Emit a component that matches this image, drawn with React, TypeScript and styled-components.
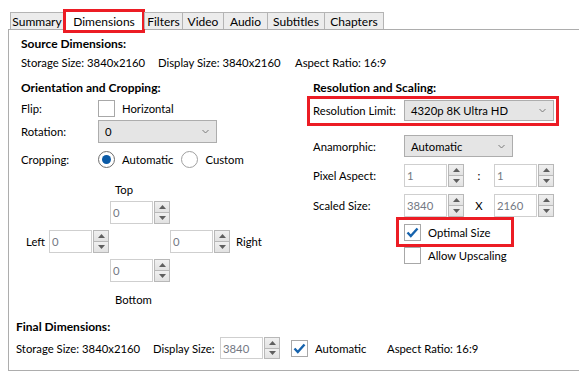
import React from 'react';
import styled, { createGlobalStyle } from 'styled-components';

const GlobalStyle = createGlobalStyle`
  html, body {
    margin: 0;
    padding: 0;
    background: #ffffff;
  }
  body {
    font-family: Lato, "Open Sans", Arial, sans-serif;
    font-size: 11.3px;
    color: #000;
  }
`;

const Window = styled.div`
  width: 579px;
  height: 378px;
  overflow: hidden;
  padding: 12px 0 0 8px;
  box-sizing: border-box;
`;

const TabBar = styled.div`
  display: flex;
  align-items: flex-end;
  height: 17px;
  padding-left: 2px;
  position: relative;
  z-index: 1;
`;

const Tab = styled.div<{ $active?: boolean; $w: number }>`
  box-sizing: border-box;
  width: ${(p) => p.$w}px;
  height: ${(p) => (p.$active ? '24px' : '17px')};
  margin-bottom: ${(p) => (p.$active ? '-4px' : '0')};
  margin-left: -1px;
  display: flex;
  align-items: center;
  justify-content: center;
  font-size: 12px;
  background: ${(p) => (p.$active ? '#ffffff' : '#ececec')};
  border: ${(p) => (p.$active ? '3px solid #ec1c24' : '1px solid #b4b4b4')};
  border-bottom: ${(p) => (p.$active ? '3px solid #ec1c24' : 'none')};
  white-space: nowrap;
  line-height: 15px;
  &:first-child {
    margin-left: 0;
  }
`;

const Panel = styled.div`
  box-sizing: border-box;
  height: 342px;
  margin-right: -20px;
  border: 1px solid #adadad;
`;

const Heading = styled.div<{ $indent?: number; $top?: number }>`
  font-weight: 700;
  font-size: 12px;
  line-height: 16px;
  padding-left: ${(p) => p.$indent ?? 0}px;
  margin-top: ${(p) => p.$top ?? 0}px;
  white-space: nowrap;
`;

const InfoRow = styled.div`
  display: grid;
  grid-template-columns: 137px 137px auto;
  line-height: 16px;
  padding-left: 12px;
  margin-top: 3px;
  white-space: nowrap;
`;

const Columns = styled.div`
  display: grid;
  grid-template-columns: 292px 1fr;
  padding-left: 12px;
  margin-top: 9px;
`;

const Column = styled.div`
  display: flex;
  flex-direction: column;
`;

const FormRow = styled.div<{ $h?: number; $top?: number; $label?: number }>`
  display: flex;
  align-items: center;
  height: ${(p) => p.$h ?? 23}px;
  margin-top: ${(p) => p.$top ?? 0}px;
  white-space: nowrap;
  & > label {
    width: ${(p) => p.$label ?? 77}px;
    flex: none;
  }
`;

const Combo = styled.div<{ $w: number; $h?: number }>`
  box-sizing: border-box;
  width: ${(p) => p.$w}px;
  height: ${(p) => p.$h ?? 23}px;
  background: #e5e5e5;
  border: 1px solid #adadad;
  display: flex;
  align-items: center;
  justify-content: space-between;
  padding: 0 7px 0 6px;
  flex: none;
`;

const Chevron = () => (
  <svg width="7" height="5" viewBox="0 0 7 5">
    <polyline points="0.5,1 3.5,4 6.5,1" fill="none" stroke="#7a7a7a" strokeWidth="1" />
  </svg>
);

const CheckBoxBox = styled.span`
  box-sizing: border-box;
  width: 17px;
  height: 17px;
  border: 1px solid #a8a8a8;
  background: #fff;
  display: inline-flex;
  align-items: center;
  justify-content: center;
  flex: none;
`;

const CheckBox = ({ checked }: { checked?: boolean }) => (
  <CheckBoxBox>
    {checked && (
      <svg width="13" height="11" viewBox="0 0 13 11">
        <polyline points="1.5,5.5 4.8,9 11.5,1.5" fill="none" stroke="#1663ad" strokeWidth="2.4" />
      </svg>
    )}
  </CheckBoxBox>
);

const Radio = styled.span<{ $on?: boolean }>`
  box-sizing: border-box;
  width: 17px;
  height: 17px;
  border-radius: 50%;
  border: 1px solid ${(p) => (p.$on ? '#6e6e6e' : '#a0a0a0')};
  display: inline-flex;
  align-items: center;
  justify-content: center;
  flex: none;
  &::after {
    content: '';
    display: ${(p) => (p.$on ? 'block' : 'none')};
    width: 9px;
    height: 9px;
    border-radius: 50%;
    background: #0a5aa6;
  }
`;

const OptionText = styled.span<{ $gap?: number }>`
  margin-left: 7px;
  margin-right: ${(p) => p.$gap ?? 0}px;
`;

const SpinWrap = styled.div<{ $h?: number }>`
  display: flex;
  gap: 1px;
  height: ${(p) => p.$h ?? 23}px;
  flex: none;
`;

const SpinField = styled.div`
  box-sizing: border-box;
  width: 43px;
  height: 100%;
  border: 1px solid #cfcfcf;
  background: #fff;
  color: #737883;
  padding-left: 2px;
  display: flex;
  align-items: center;
`;

const SpinButtons = styled.div`
  width: 16px;
  height: 100%;
  display: flex;
  flex-direction: column;
`;

const SpinButton = styled.div`
  box-sizing: border-box;
  flex: 1;
  border: 1px solid #b8b8b8;
  background: linear-gradient(#f0f0f0, #e2e2e2);
  display: flex;
  align-items: center;
  justify-content: center;
  & + & {
    border-top: none;
  }
`;

const Arrow = ({ up }: { up?: boolean }) => (
  <svg width="7" height="4" viewBox="0 0 7 4">
    <polygon points={up ? '0,4 3.5,0 7,4' : '0,0 3.5,4 7,0'} fill="#5f5f5f" />
  </svg>
);

const Spin = ({ value, h }: { value: string; h?: number }) => (
  <SpinWrap $h={h}>
    <SpinField>{value}</SpinField>
    <SpinButtons>
      <SpinButton>
        <Arrow up />
      </SpinButton>
      <SpinButton>
        <Arrow />
      </SpinButton>
    </SpinButtons>
  </SpinWrap>
);

const CropCaption = styled.div<{ $top: number }>`
  line-height: 16px;
  padding-left: 94px;
  margin-top: ${(p) => p.$top}px;
`;

const CropGrid = styled.div`
  display: grid;
  grid-template-columns: 23px 61px 60px 66px auto;
  grid-template-rows: 23px 23px 23px;
  row-gap: 6px;
  align-items: center;
  margin: 3px 0 0 5px;
`;

const Cell = styled.div<{ $col: number; $row: number }>`
  grid-column: ${(p) => p.$col};
  grid-row: ${(p) => p.$row};
`;

const Highlight = styled.div`
  box-sizing: border-box;
  border: 3px solid #ec1c24;
  background: #fff;
`;

const LimitBox = styled(Highlight)`
  width: 252px;
  margin-left: -6px;
  padding: 1px 2px 2px 3px;
`;

const OptimalBox = styled(Highlight)`
  width: 118px;
  margin-left: 83px;
  padding: 4px 0 3px 5px;
  display: flex;
  align-items: center;
`;

const Separator = styled.span`
  width: 30px;
  text-align: center;
  flex: none;
`;

const CheckRow = styled.div`
  display: flex;
  align-items: center;
  padding-left: 91px;
  height: 17px;
`;

const FinalRow = styled.div`
  display: grid;
  grid-template-columns: 137px 67px 71px 24px 72px auto;
  align-items: center;
  height: 22px;
  margin-top: 2px;
  padding-left: 7px;
  white-space: nowrap;
`;

const tabs: [string, number][] = [
  ['Summary', 54],
  ['Dimensions', 82],
  ['Filters', 39],
  ['Video', 42],
  ['Audio', 45],
  ['Subtitles', 58],
  ['Chapters', 60],
];

export default function App() {
  return (
    <Window>
      <GlobalStyle />
      <TabBar>
        {tabs.map(([t, w]) => (
          <Tab key={t} $w={w} $active={t === 'Dimensions'}>
            {t}
          </Tab>
        ))}
      </TabBar>
      <Panel>
        <Heading $indent={12} $top={6}>
          Source Dimensions:
        </Heading>
        <InfoRow>
          <span>Storage Size: 3840x2160</span>
          <span>Display Size: 3840x2160</span>
          <span>Aspect Ratio: 16:9</span>
        </InfoRow>

        <Columns>
          <Column>
            <Heading>Orientation and Cropping:</Heading>
            <FormRow $top={1}>
              <label>Flip:</label>
              <CheckBox />
              <OptionText>Horizontal</OptionText>
            </FormRow>
            <FormRow>
              <label>Rotation:</label>
              <Combo $w={119}>
                <span>0</span>
                <Chevron />
              </Combo>
            </FormRow>
            <FormRow $top={4} $h={24}>
              <label>Cropping:</label>
              <Radio $on />
              <OptionText $gap={8}>Automatic</OptionText>
              <Radio />
              <OptionText>Custom</OptionText>
            </FormRow>

            <CropCaption $top={11}>Top</CropCaption>
            <CropGrid>
              <Cell $col={3} $row={1}>
                <Spin value="0" />
              </Cell>
              <Cell $col={1} $row={2}>
                Left
              </Cell>
              <Cell $col={2} $row={2}>
                <Spin value="0" />
              </Cell>
              <Cell $col={4} $row={2}>
                <Spin value="0" />
              </Cell>
              <Cell $col={5} $row={2}>
                Right
              </Cell>
              <Cell $col={3} $row={3}>
                <Spin value="0" />
              </Cell>
            </CropGrid>
            <CropCaption $top={10}>Bottom</CropCaption>
          </Column>

          <Column>
            <Heading>Resolution and Scaling:</Heading>
            <LimitBox>
              <FormRow $h={21} $label={91}>
                <label>Resolution Limit:</label>
                <Combo $w={150} $h={21}>
                  <span>4320p 8K Ultra HD</span>
                  <Chevron />
                </Combo>
              </FormRow>
            </LimitBox>
            <FormRow $top={9} $h={22} $label={91}>
              <label>Anamorphic:</label>
              <Combo $w={109} $h={22}>
                <span>Automatic</span>
                <Chevron />
              </Combo>
            </FormRow>
            <FormRow $top={7} $label={91}>
              <label>Pixel Aspect:</label>
              <Spin value="1" />
              <Separator>:</Separator>
              <Spin value="1" />
            </FormRow>
            <FormRow $top={7} $label={91}>
              <label>Scaled Size:</label>
              <Spin value="3840" />
              <Separator>X</Separator>
              <Spin value="2160" />
            </FormRow>
            <OptimalBox>
              <CheckBox checked />
              <OptionText>Optimal Size</OptionText>
            </OptimalBox>
            <CheckRow>
              <CheckBox />
              <OptionText>Allow Upscaling</OptionText>
            </CheckRow>
          </Column>
        </Columns>

        <Heading $indent={7} $top={11}>
          Final Dimensions:
        </Heading>
        <FinalRow>
          <span>Storage Size: 3840x2160</span>
          <span>Display Size:</span>
          <Spin value="3840" h={22} />
          <CheckBox checked />
          <span>Automatic</span>
          <span>Aspect Ratio: 16:9</span>
        </FinalRow>
      </Panel>
    </Window>
  );
}
